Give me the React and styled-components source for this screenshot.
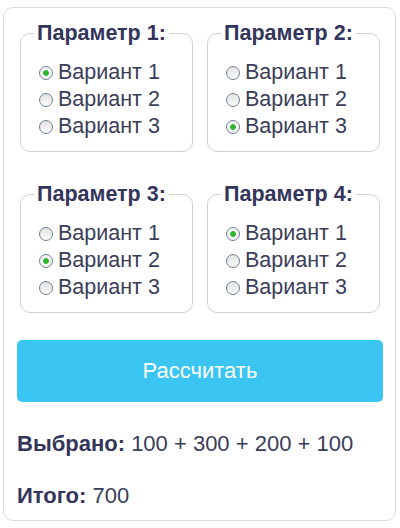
import React, { useState } from "react";
import styled, { createGlobalStyle } from "styled-components";

const params = [
  { title: "Параметр 1:", values: [100, 200, 300], picked: 0 },
  { title: "Параметр 2:", values: [100, 200, 300], picked: 2 },
  { title: "Параметр 3:", values: [100, 200, 300], picked: 1 },
  { title: "Параметр 4:", values: [100, 200, 300], picked: 0 },
];

const App = () => {
  const [picked, setPicked] = useState(params.map((p) => p.picked));
  const [result, setResult] = useState({ list: [100, 300, 200, 100], total: 700 });

  const handleCalc = () => {
    const list = picked.map((i, n) => params[n].values[i]);
    setResult({ list, total: list.reduce((a, b) => a + b, 0) });
  };

  return (
    <>
      <Global />
      <Card>
        <Grid>
          {params.map((p, n) => (
            <Group key={p.title}>
              <Legend>{p.title}</Legend>
              {p.values.map((v, i) => (
                <Option key={i}>
                  <Hidden
                    type="radio"
                    name={"param" + n}
                    checked={picked[n] === i}
                    onChange={() => {
                      const next = [...picked];
                      next[n] = i;
                      setPicked(next);
                    }}
                  />
                  <Dot $checked={picked[n] === i} />
                  Вариант {i + 1}
                </Option>
              ))}
            </Group>
          ))}
        </Grid>
        <Button onClick={handleCalc}>Рассчитать</Button>
        <Line>
          <b>Выбрано:</b> {result.list.join(" + ")}
        </Line>
        <Line $last>
          <b>Итого:</b> {result.total}
        </Line>
      </Card>
    </>
  );
};

const Global = createGlobalStyle`
  body {
    margin: 0;
    background: #ffffff;
    font-family: "Liberation Sans", Arial, sans-serif;
    color: #3a3d58;
  }
`;

const Card = styled.div`
  box-sizing: border-box;
  width: 393px;
  margin: 7px 0 0 3px;
  padding: 0 12px 11px 13px;
  border: 1px solid #dcdcdc;
  border-radius: 10px;
`;

const Grid = styled.div`
  display: grid;
  grid-template-columns: 173px 173px;
  column-gap: 14px;
  row-gap: 30px;
  margin: 13px 3px 0;
`;

const Group = styled.fieldset`
  box-sizing: border-box;
  margin: 0;
  padding: 14px 6px 11px 18px;
  border: 1px solid #d0d0d0;
  border-radius: 10px;
  min-width: 0;
`;

const Legend = styled.legend`
  margin-left: -5px;
  padding: 0 3px;
  font-size: 21.5px;
  font-weight: bold;
  line-height: 24px;
  color: #33365a;
`;

const Option = styled.label`
  display: flex;
  align-items: center;
  height: 27px;
  font-size: 21.5px;
  color: #3a3d58;
  cursor: pointer;
`;

const Hidden = styled.input`
  position: absolute;
  opacity: 0;
  width: 0;
  height: 0;
  margin: 0;
`;

const Dot = styled.span`
  box-sizing: border-box;
  width: 14px;
  height: 14px;
  margin-right: 5px;
  border-radius: 50%;
  border: 1px solid #6f7f95;
  background: ${(p) =>
    p.$checked
      ? "radial-gradient(circle, #2eb82e 0 2.5px, #f4f4f4 3.2px)"
      : "linear-gradient(#e2e2e2, #fbfbfb)"};
  flex-shrink: 0;
`;

const Button = styled.button`
  display: block;
  width: 100%;
  height: 62px;
  margin-top: 27px;
  border: none;
  border-radius: 5px;
  background: #3bc5f3;
  color: #ffffff;
  font-family: "Liberation Sans", Arial, sans-serif;
  font-size: 22px;
  cursor: pointer;
`;

const Line = styled.p`
  margin: ${(p) => (p.$last ? "26px 0 0" : "29px 0 0")};
  font-size: 22px;
  line-height: 26px;
  color: #3a3d58;
  b {
    color: #33365a;
  }
`;

export default App;
